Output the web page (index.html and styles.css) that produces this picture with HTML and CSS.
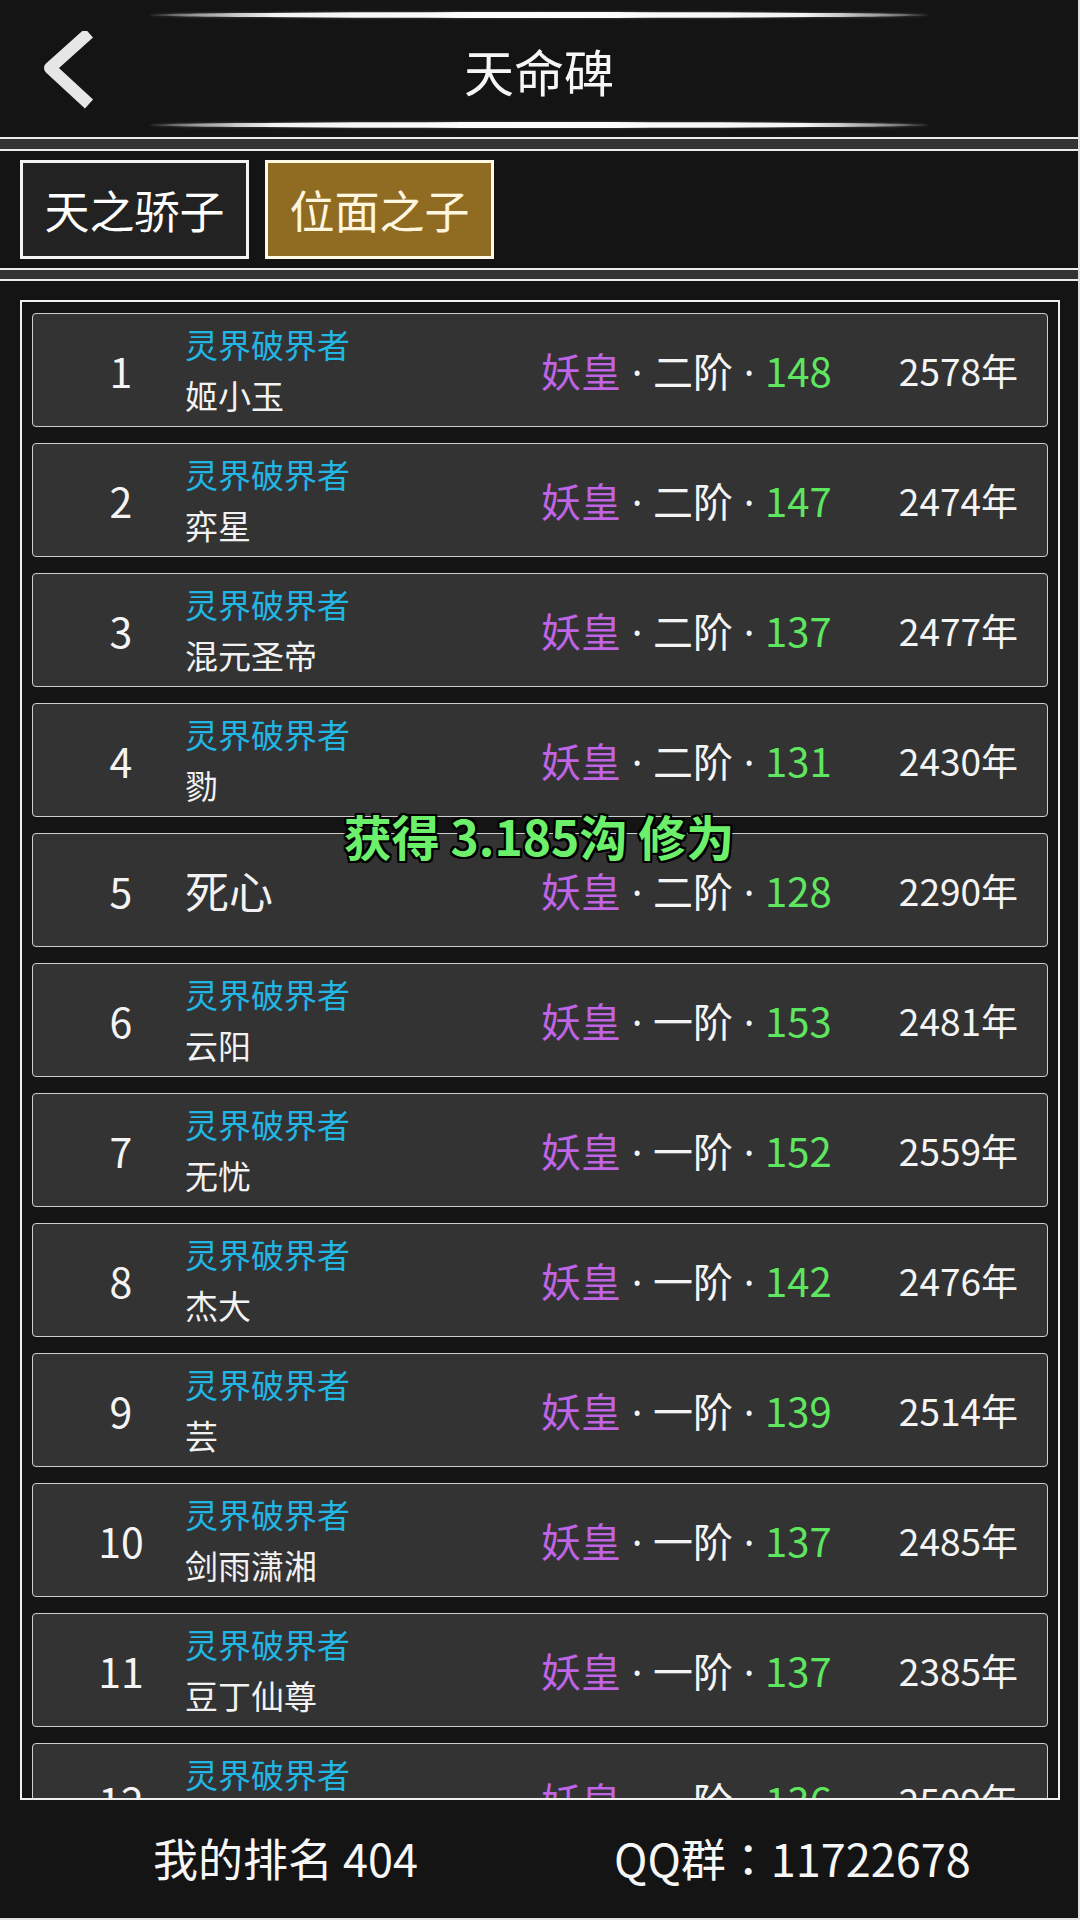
FILE: index.html
```html
<!DOCTYPE html>
<html lang="zh-CN">
<head>
<meta charset="utf-8">
<title>天命碑</title>
<link rel="stylesheet" href="styles.css">
</head>
<body>
<div class="app">
  <header class="topbar">
    <div class="glow-line"></div>
    <div class="title-row">
      <div class="back">
        <svg width="64" height="80" viewBox="0 0 64 80">
          <polyline points="48,2 9,37 48,73" fill="none" stroke="#e6e6e6" stroke-width="12" stroke-linejoin="round" stroke-linecap="butt"/>
        </svg>
      </div>
      <h1 class="title">天命碑</h1>
      <div></div>
    </div>
    <div class="glow-line"></div>
  </header>
  <div class="sep"></div>
  <nav class="tabs">
    <div class="tab">天之骄子</div>
    <div class="tab active">位面之子</div>
  </nav>
  <div class="sep sep-thin"></div>
  <main class="board-wrap">
    <div class="board">
      <div class="row"><div class="rank">1</div><div class="who"><span class="tag">灵界破界者</span><span class="name">姬小玉</span></div><div class="realm"><span class="race">妖皇</span><span class="dot">·</span>二阶<span class="dot">·</span><span class="lv">148</span></div><div class="age">2578年</div></div>
      <div class="row"><div class="rank">2</div><div class="who"><span class="tag">灵界破界者</span><span class="name">弈星</span></div><div class="realm"><span class="race">妖皇</span><span class="dot">·</span>二阶<span class="dot">·</span><span class="lv">147</span></div><div class="age">2474年</div></div>
      <div class="row"><div class="rank">3</div><div class="who"><span class="tag">灵界破界者</span><span class="name">混元圣帝</span></div><div class="realm"><span class="race">妖皇</span><span class="dot">·</span>二阶<span class="dot">·</span><span class="lv">137</span></div><div class="age">2477年</div></div>
      <div class="row"><div class="rank">4</div><div class="who"><span class="tag">灵界破界者</span><span class="name">勠</span></div><div class="realm"><span class="race">妖皇</span><span class="dot">·</span>二阶<span class="dot">·</span><span class="lv">131</span></div><div class="age">2430年</div></div>
      <div class="row"><div class="rank">5</div><div class="who"><span class="name big">死心</span></div><div class="realm"><span class="race">妖皇</span><span class="dot">·</span>二阶<span class="dot">·</span><span class="lv">128</span></div><div class="age">2290年</div></div>
      <div class="row"><div class="rank">6</div><div class="who"><span class="tag">灵界破界者</span><span class="name">云阳</span></div><div class="realm"><span class="race">妖皇</span><span class="dot">·</span>一阶<span class="dot">·</span><span class="lv">153</span></div><div class="age">2481年</div></div>
      <div class="row"><div class="rank">7</div><div class="who"><span class="tag">灵界破界者</span><span class="name">无忧</span></div><div class="realm"><span class="race">妖皇</span><span class="dot">·</span>一阶<span class="dot">·</span><span class="lv">152</span></div><div class="age">2559年</div></div>
      <div class="row"><div class="rank">8</div><div class="who"><span class="tag">灵界破界者</span><span class="name">杰大</span></div><div class="realm"><span class="race">妖皇</span><span class="dot">·</span>一阶<span class="dot">·</span><span class="lv">142</span></div><div class="age">2476年</div></div>
      <div class="row"><div class="rank">9</div><div class="who"><span class="tag">灵界破界者</span><span class="name">芸</span></div><div class="realm"><span class="race">妖皇</span><span class="dot">·</span>一阶<span class="dot">·</span><span class="lv">139</span></div><div class="age">2514年</div></div>
      <div class="row"><div class="rank">10</div><div class="who"><span class="tag">灵界破界者</span><span class="name">剑雨潇湘</span></div><div class="realm"><span class="race">妖皇</span><span class="dot">·</span>一阶<span class="dot">·</span><span class="lv">137</span></div><div class="age">2485年</div></div>
      <div class="row"><div class="rank">11</div><div class="who"><span class="tag">灵界破界者</span><span class="name">豆丁仙尊</span></div><div class="realm"><span class="race">妖皇</span><span class="dot">·</span>一阶<span class="dot">·</span><span class="lv">137</span></div><div class="age">2385年</div></div>
      <div class="row"><div class="rank">12</div><div class="who"><span class="tag">灵界破界者</span><span class="name">逍遥</span></div><div class="realm"><span class="race">妖皇</span><span class="dot">·</span>一阶<span class="dot">·</span><span class="lv">136</span></div><div class="age">2509年</div></div>
    </div>
  </main>
  <footer class="footer">
    <span>我的排名 404</span>
    <span>QQ群<span class="colon" lang="zh-TW">：</span>11722678</span>
  </footer>
  <div class="toast">获得 3.185沟 修为</div>
</div>
</body>
</html>
```

FILE: styles.css
```css
* { box-sizing: border-box; }
html, body { margin: 0; padding: 0; }
body {
  background: #141414;
  font-family: "Noto Sans CJK SC", "Noto Sans", sans-serif;
  color: #fff;
}
.app {
  position: relative;
  width: 1080px;
  height: 1920px;
  background: #141414;
  border-right: 2px solid #e2e2e2;
  border-bottom: 2px solid #e2e2e2;
  display: flex;
  flex-direction: column;
  overflow: hidden;
}
.topbar {
  height: 137px;
  padding-top: 12px;
  display: flex;
  flex-direction: column;
  align-items: center;
}
.glow-line {
  width: 778px;
  height: 6px;
  border-radius: 50%;
  background: linear-gradient(to right, #3c3c3c 0%, #9a9a9a 6%, #f4f4f4 16%, #ffffff 50%, #f4f4f4 84%, #9a9a9a 94%, #3c3c3c 100%);
  box-shadow: 0 0 3px rgba(255,255,255,0.25);
}
.title-row {
  width: 100%;
  height: 104px;
  display: grid;
  grid-template-columns: 140px 1fr 140px;
  align-items: center;
}
.back {
  padding-left: 41px;
  display: flex;
  align-items: center;
  padding-top: 2px;
}
.back svg { display: block; }
.title {
  margin: 0;
  text-align: center;
  font-size: 50px;
  font-weight: 400;
  line-height: 60px;
  color: #f6f6f6;
}
.sep {
  height: 14px;
  background: #333;
  border-top: 2px solid #ececec;
  border-bottom: 2px solid #ececec;
}
.sep-thin { height: 13px; }
.tabs {
  height: 117px;
  padding: 9px 20px;
  display: flex;
  gap: 16px;
}
.tab {
  width: 229px;
  height: 99px;
  border: 3px solid #f4f4f4;
  background: #222;
  display: flex;
  align-items: center;
  justify-content: center;
  font-size: 45px;
  color: #fff;
}
.tab.active {
  background: #8f6c22;
  border-color: #fff9e6;
  color: #fff6e0;
}
.board-wrap {
  padding: 19px 18px 0 20px;
}
.board {
  height: 1500px;
  border: 2px solid #f0f0f0;
  padding: 11px 10px 0 10px;
  overflow: hidden;
  display: flex;
  flex-direction: column;
  gap: 16px;
}
.row {
  flex: none;
  height: 114px;
  background: #333333;
  border: 1px solid #cfcfcf;
  border-radius: 4px;
  display: grid;
  grid-template-columns: 152px 356px 1fr auto;
  align-items: center;
  padding-right: 29px;
}
.rank {
  padding-left: 24px;
  text-align: center;
  font-size: 41px;
  color: #f4f4f4;
}
.who {
  display: flex;
  flex-direction: column;
  justify-content: center;
}
.tag, .name {
  font-size: 33px;
  line-height: 51px;
}
.tag { color: #22b6e4; }
.name { color: #f2f2f2; }
.name.big { font-size: 44px; }
.realm {
  font-size: 40px;
  color: #f4f4f4;
  white-space: nowrap;
}
.dot {
  display: inline-block;
  width: 32px;
  text-align: center;
  font-family: "Noto Sans", sans-serif;
}
.race { color: #c064e6; }
.lv { color: #5fe660; }
.age {
  font-size: 37px;
  color: #f4f4f4;
  white-space: nowrap;
}
.footer {
  flex: 1;
  display: flex;
  align-items: center;
  padding-left: 153px;
  gap: 196px;
  font-size: 45px;
  color: #f6f6f6;
  padding-bottom: 4px;
}
.colon {
  font-family: "Noto Sans CJK TC", "Noto Sans CJK SC", sans-serif;
}
.toast {
  position: absolute;
  top: 807px;
  left: 0;
  right: 0;
  text-align: center;
  font-size: 48px;
  line-height: 56px;
  font-weight: 700;
  color: #6cf06c;
  text-shadow:
    2px 0 0 #000, -2px 0 0 #000, 0 2px 0 #000, 0 -2px 0 #000,
    2px 2px 0 #000, -2px -2px 0 #000, 2px -2px 0 #000, -2px 2px 0 #000;
}
```
